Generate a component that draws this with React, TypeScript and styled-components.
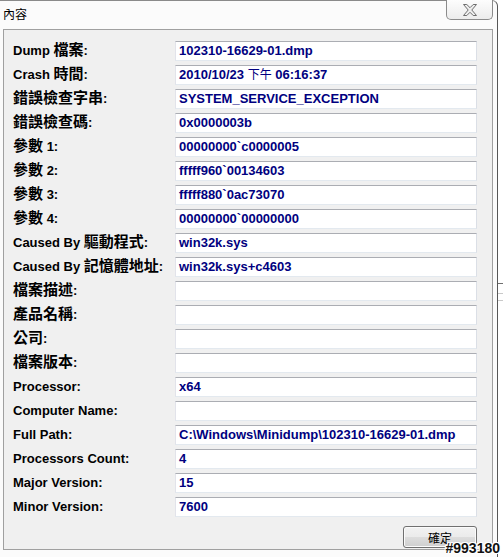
import React from "react";
import styled, { createGlobalStyle } from "styled-components";

const Global = createGlobalStyle`
  html, body { margin: 0; padding: 0; background: #ffffff; }
  body { width: 503px; height: 557px; overflow: hidden; }
  * { box-sizing: border-box; }
`;

const Screen = styled.div`
  position: relative;
  width: 503px;
  height: 557px;
  overflow: hidden;
  background: #ffffff;
  display: flex;
`;

const BackWindow = styled.div`
  position: absolute;
  left: 498px;
  top: 0;
  width: 5px;
  height: 557px;
  background: #ffffff;
  overflow: hidden;
`;

const BackLine = styled.div<{ $top: number; $color: string }>`
  position: absolute;
  left: 0;
  top: ${(p) => p.$top}px;
  width: 5px;
  height: 1px;
  background: ${(p) => p.$color};
`;

const Window = styled.div`
  position: relative;
  width: 498px;
  height: 557px;
  border-top: 1px solid #8a8a8a;
  border-right: 1px solid #575757;
  border-top-right-radius: 6px;
  background: #fbfbfb;
  display: flex;
  flex-direction: column;
`;

const TitleBar = styled.div`
  height: 28px;
  display: flex;
  align-items: flex-start;
  padding-left: 3px;
`;

const Title = styled.span`
  margin-top: 5px;
  font: 12px/16px "Noto Sans CJK TC", "Liberation Sans", sans-serif;
  color: #000;
`;

const CloseButton = styled.div`
  margin-left: auto;
  margin-right: 4px;
  margin-top: -1px;
  width: 47px;
  height: 20px;
  border: 1px solid #8b8b8b;
  border-top: none;
  border-radius: 0 0 5px 5px;
  background: linear-gradient(#fdfdfd, #ececec);
  display: flex;
  align-items: center;
  justify-content: center;
`;

const Panel = styled.div`
  flex: 1;
  margin: 0 4px 7px 3px;
  border: 1px solid #a0a0a0;
  background: #f0f0f0;
  padding: 11px 15px 0 9px;
  display: flex;
  flex-direction: column;
`;

const Grid = styled.div`
  display: grid;
  grid-template-columns: 162px 302px;
  grid-auto-rows: 20px;
  row-gap: 4px;
  align-items: center;
`;

const Label = styled.div`
  height: 20px;
  font: bold 13px/20px "Liberation Sans", "Noto Sans CJK TC", sans-serif;
  color: #000;
  white-space: pre;
`;

const Field = styled.div`
  height: 20px;
  border: 1px solid;
  border-color: #abadb3 #dbdfe6 #e3e9ef #e2e3ea;
  background: #ffffff;
  padding: 0 3px;
  font: bold 13px/18px "Liberation Sans", "Noto Sans CJK TC", sans-serif;
  color: #000080;
  white-space: pre;
  overflow: hidden;
`;

const Cjk = styled.span<{ $size: number; $bold: boolean }>`
  font-family: "Noto Sans CJK TC", sans-serif;
  font-size: ${(p) => p.$size}px;
  font-weight: ${(p) => (p.$bold ? 700 : 400)};
  line-height: 1;
`;

const ButtonRow = styled.div`
  margin-top: 9px;
  display: flex;
  justify-content: flex-end;
  width: 464px;
`;

const Button = styled.div`
  width: 74px;
  height: 22px;
  border: 1px solid #707070;
  border-radius: 3px;
  background: linear-gradient(#f2f2f2 0%, #ebebeb 50%, #dddddd 51%, #cfcfcf 100%);
  box-shadow: inset 0 0 0 1px #fbfbfb;
  display: flex;
  align-items: center;
  justify-content: center;
  font: 12px "Noto Sans CJK TC", "Liberation Sans", sans-serif;
  color: #000;
`;

const Watermark = styled.div`
  position: absolute;
  right: 3px;
  bottom: 1px;
  font: bold 14px/16px "Liberation Sans", sans-serif;
  color: #111;
  text-shadow: 1px 0 0 #fff, -1px 0 0 #fff, 0 1px 0 #fff, 0 -1px 0 #fff,
    1px 1px 0 #fff, -1px -1px 0 #fff, 1px -1px 0 #fff, -1px 1px 0 #fff;
`;

const CJK_RE = /([\u3400-\u9fff\uf900-\ufaff]+)/;

function Mixed({ text, size, bold }: { text: string; size: number; bold: boolean }) {
  const parts = text.split(CJK_RE);
  return (
    <>
      {parts.map((part, i) =>
        CJK_RE.test(part) ? (
          <Cjk key={i} $size={size} $bold={bold}>
            {part}
          </Cjk>
        ) : (
          <React.Fragment key={i}>{part}</React.Fragment>
        )
      )}
    </>
  );
}

const rows: [string, string][] = [
  ["Dump 檔案:", "102310-16629-01.dmp"],
  ["Crash 時間:", "2010/10/23 下午 06:16:37"],
  ["錯誤檢查字串:", "SYSTEM_SERVICE_EXCEPTION"],
  ["錯誤檢查碼:", "0x0000003b"],
  ["參數 1:", "00000000`c0000005"],
  ["參數 2:", "fffff960`00134603"],
  ["參數 3:", "fffff880`0ac73070"],
  ["參數 4:", "00000000`00000000"],
  ["Caused By 驅動程式:", "win32k.sys"],
  ["Caused By 記憶體地址:", "win32k.sys+c4603"],
  ["檔案描述:", ""],
  ["產品名稱:", ""],
  ["公司:", ""],
  ["檔案版本:", ""],
  ["Processor:", "x64"],
  ["Computer Name:", ""],
  ["Full Path:", "C:\\Windows\\Minidump\\102310-16629-01.dmp"],
  ["Processors Count:", "4"],
  ["Major Version:", "15"],
  ["Minor Version:", "7600"],
];

function CloseGlyph() {
  return (
    <svg width="14" height="12" viewBox="0 0 14 12">
      <polygon
        points="0.5,0.5 3.8,0.5 7,3.7 10.2,0.5 13.5,0.5 8.8,6 13.5,11.5 10.2,11.5 7,8.3 3.8,11.5 0.5,11.5 5.2,6"
        fill="#eeeeee"
        stroke="#6e6e6e"
        strokeWidth="1"
        strokeLinejoin="round"
      />
    </svg>
  );
}

export default function App() {
  return (
    <>
      <Global />
      <Screen>
        <BackWindow>
          <BackLine $top={283} $color="#6f6f6f" />
          <BackLine $top={293} $color="#c9c9c9" />
          <BackLine $top={300} $color="#c9c9c9" />
        </BackWindow>
        <Window>
          <TitleBar>
            <Title>內容</Title>
            <CloseButton>
              <CloseGlyph />
            </CloseButton>
          </TitleBar>
          <Panel>
            <Grid>
              {rows.map(([label, value]) => (
                <React.Fragment key={label}>
                  <Label>
                    <Mixed text={label} size={15} bold={true} />
                  </Label>
                  <Field>
                    <Mixed text={value} size={12} bold={false} />
                  </Field>
                </React.Fragment>
              ))}
            </Grid>
            <ButtonRow>
              <Button>確定</Button>
            </ButtonRow>
          </Panel>
        </Window>
        <Watermark>#993180</Watermark>
      </Screen>
    </>
  );
}
